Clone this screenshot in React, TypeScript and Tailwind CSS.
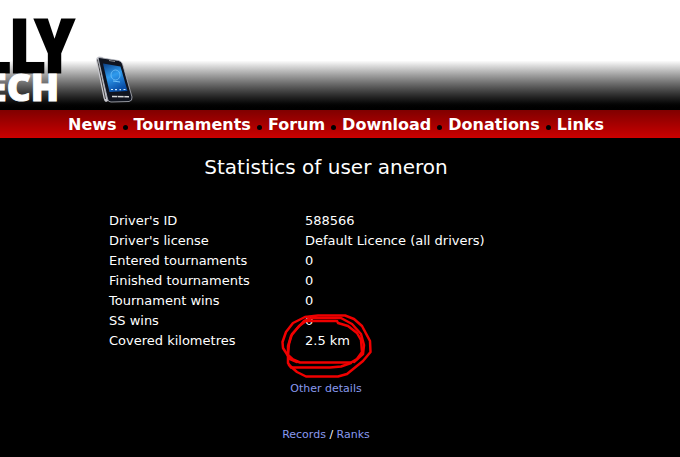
import React from 'react';

const NAV_ITEMS = ['News', 'Tournaments', 'Forum', 'Download', 'Donations', 'Links'];

const STATS = [
  { label: "Driver's ID", value: '588566' },
  { label: "Driver's license", value: 'Default Licence (all drivers)' },
  { label: 'Entered tournaments', value: '0' },
  { label: 'Finished tournaments', value: '0' },
  { label: 'Tournament wins', value: '0' },
  { label: 'SS wins', value: '0' },
  { label: 'Covered kilometres', value: '2.5 km', marked: true },
];

const Phone: React.FC = () => (
  <svg className="w-10 h-12" viewBox="94 55 40 48" fill="none" aria-hidden="true">
    <defs>
      <linearGradient id="screen" x1="0" y1="0" x2="0.4" y2="1">
        <stop offset="0" stopColor="#0b3f86" />
        <stop offset="0.5" stopColor="#2f9bee" />
        <stop offset="1" stopColor="#0a4fa8" />
      </linearGradient>
    </defs>
    <path d="M96 60Q96 57 99 56.500L103 57L112 99L106 102Q104 101 103.500 98Z" fill="#c9c9d0" />
    <path d="M97.500 59.500L105.500 99" stroke="#444" strokeWidth="1" />
    <path d="M99 57.500L118.500 60.500Q121.500 61 122.500 64L132 97Q132.500 101 129 101.500L111 102Q108 102 107.500 99L98.500 60Q98 58 99 57.500Z" fill="#10141f" stroke="#b5b8c0" strokeWidth="0.8" />
    <path d="M103 63.500L120.500 66.500L127.500 91L109.500 92Z" fill="url(#screen)" />
    <path d="M109 60.500L115 61.500" stroke="#aaa" strokeWidth="0.8" />
    <ellipse cx="115.500" cy="75" rx="4.500" ry="5" stroke="#72c2fa" strokeWidth="0.8" />
    <path d="M113 81L120 82" stroke="#72c2fa" strokeWidth="1" />
    <path d="M111 89.500H113M115 89.700H117M119.500 89.700H121M123.500 89.500H125.500" stroke="#cfeaff" strokeWidth="1.200" />
    <path d="M112 96.500L129 96.800" stroke="#d6d6d6" strokeWidth="1.600" />
    <path d="M117.500 95.500V98M124 95.500V98" stroke="#10141f" strokeWidth="0.6" />
  </svg>
);

const Scribble: React.FC = () => (
  <svg
    className="absolute -left-6 -top-5 w-24 h-17 pointer-events-none"
    viewBox="281 311 96 68"
    fill="none"
    stroke="#f00000"
    strokeWidth="2.500"
    strokeLinecap="round"
    strokeLinejoin="round"
    aria-hidden="true"
  >
    <path d="M337 321L338 323L348 326L357 333L361 340L362 352L357 359L351 362.500H300L293 359.500L288 355" />
    <path d="M351 363L341 366.500L330 367.500H291L288 363V346L291 336L299 326L306 321H336" />
    <path d="M297 362L290 359L283 348L282.500 342L286 332L293 323L305 317L318 315.500H345L354 319L362 326L370 341L370.500 352L363 361L347 374L338 376.500H306L297 372L289 365" />
    <path d="M288 354L289 344L292 334L304 321L312 318H341L352 324L361 334L364 345L363 354L354 362" />
  </svg>
);

const App: React.FC = () => {
  return (
    <div className="min-h-screen bg-black text-white font-['DejaVu_Sans',Verdana,sans-serif]">
      <header className="relative h-[110px] overflow-hidden bg-linear-to-b from-white from-55% to-black">
        <div className="absolute right-full top-3 -mr-[74px] text-7xl font-bold text-black [-webkit-text-stroke:3px_black] font-['Liberation_Sans_Narrow','Roboto_Condensed','Open_Sans_Condensed','DejaVu_Sans_Condensed',sans-serif]">
          RALLY
        </div>
        <div className="absolute right-full top-[67px] -mr-[59px] text-[37px] leading-10 font-extrabold [-webkit-text-stroke:1px_white] font-['Open_Sans',sans-serif]">
          TECH
        </div>
        <div className="absolute left-[94px] top-[55px]">
          <Phone />
        </div>
      </header>

      <nav className="h-7 pt-0.5 pr-2 flex items-center justify-center bg-linear-to-b from-[#800000] to-[#cc0000] text-base font-bold">
        {NAV_ITEMS.map((item, i) => (
          <React.Fragment key={item}>
            {i > 0 && <span className="w-[5px] h-[5px] mx-[6px] mt-1 rounded-full bg-black" />}
            <a href="#">{item}</a>
          </React.Fragment>
        ))}
      </nav>

      <main className="pt-[15px] pr-7 flex flex-col items-center">
        <h1 className="text-xl leading-7">Statistics of user aneron</h1>

        <table className="mt-[30px] w-[434px] text-[13px] leading-5">
          <tbody>
            {STATS.map((row) => (
              <tr key={row.label}>
                <th scope="row" className="w-[196px] p-0 text-left font-normal">{row.label}</th>
                <td className="p-0 relative">
                  {row.value}
                  {row.marked && <Scribble />}
                </td>
              </tr>
            ))}
          </tbody>
        </table>

        <p className="mt-7 text-[11px] leading-5">
          <a href="#" className="text-[#8899ee]">Other details</a>
        </p>
        <p className="mt-[26px] text-[11px] leading-5">
          <a href="#" className="text-[#8899ee]">Records</a> / <a href="#" className="text-[#8899ee]">Ranks</a>
        </p>
      </main>
    </div>
  );
};

export default App;
